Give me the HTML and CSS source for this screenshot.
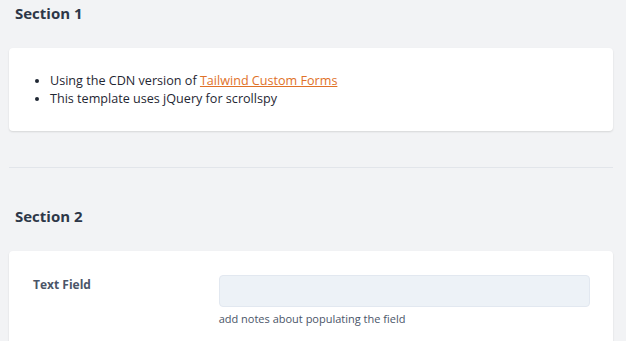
FILE: index.html
```html
<!DOCTYPE html>
<html lang="en">
<head>
<meta charset="utf-8">
<title>Sections</title>
<link rel="stylesheet" href="styles.css">
</head>
<body>
<main class="main">
  <section class="section">
    <h2 class="section-title">Section 1</h2>
    <div class="card card-list">
      <ul class="notes">
        <li>Using the CDN version of <a class="link" href="#">Tailwind Custom Forms</a></li>
        <li>This template uses jQuery for scrollspy</li>
      </ul>
    </div>
  </section>
  <hr class="divider">
  <section class="section section-2">
    <h2 class="section-title">Section 2</h2>
    <div class="card card-form">
      <div class="form-row">
        <label class="field-label" for="text-field">Text Field</label>
        <div class="field-control">
          <input class="text-input" id="text-field" type="text">
          <p class="help">add notes about populating the field</p>
        </div>
      </div>
    </div>
  </section>
</main>
</body>
</html>
```

FILE: styles.css
```css
html, body {
  margin: 0;
  padding: 0;
}
body {
  background: #f2f3f5;
  font-family: "Open Sans", "Liberation Sans", sans-serif;
  color: #2d3748;
  overflow: hidden;
}
.main {
  padding: 0 13px 0 9px;
}
.section-title {
  margin: 0;
  padding: 2px 0 0 6px;
  font-size: 15px;
  line-height: 22px;
  font-weight: 700;
  color: #2d3748;
}
.card {
  background: #ffffff;
  border-radius: 4px;
  box-shadow: 0 1px 2px rgba(0, 0, 0, 0.12);
}
.card-list {
  margin-top: 24px;
  padding: 24px 24px 23px 24px;
}
.notes {
  margin: 0;
  padding-left: 17px;
  font-size: 12.6px;
  line-height: 18px;
  color: #1f2733;
}
.link {
  color: #df7128;
  text-decoration: underline;
}
.divider {
  border: 0;
  border-top: 1px solid #e2e5ea;
  margin: 36px 0 0 0;
}
.section-2 {
  padding-top: 37px;
}
.section-2 .section-title {
  padding-top: 0;
}
.card-form {
  margin-top: 24px;
  padding: 24px 23px 40px 24px;
}
.form-row {
  display: grid;
  grid-template-columns: 1fr 2fr;
}
.field-label {
  font-size: 12px;
  font-weight: 700;
  color: #4a5568;
  padding-top: 2px;
  line-height: 16px;
}
.text-input {
  display: block;
  box-sizing: border-box;
  width: 100%;
  height: 32px;
  margin: 0;
  background: #edf2f7;
  border: 1px solid #e2e8f0;
  border-radius: 4px;
}
.help {
  margin: 4px 0 0 0;
  font-size: 11px;
  line-height: 16px;
  color: #4a5568;
}
```
